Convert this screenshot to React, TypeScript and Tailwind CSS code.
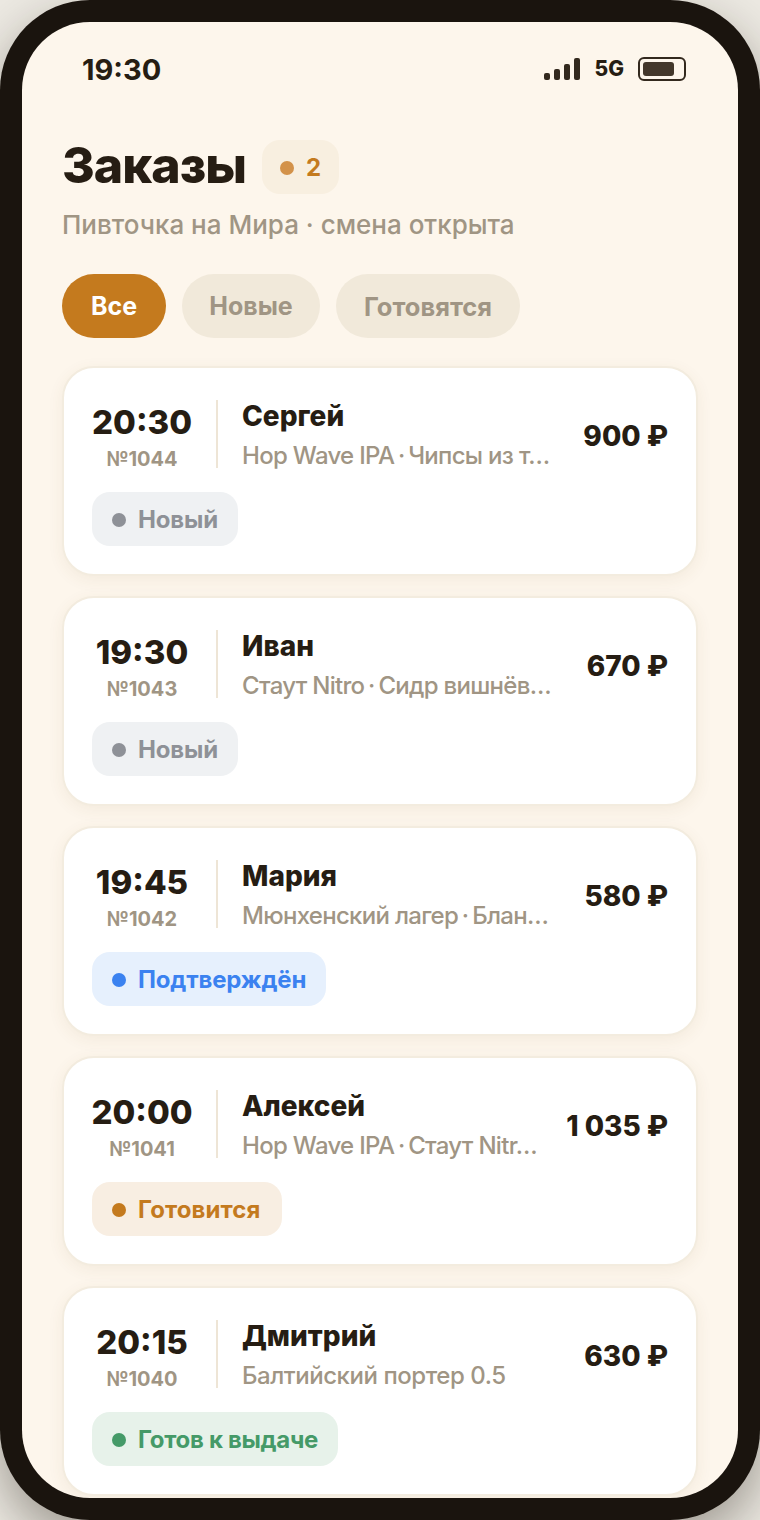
import React from 'react';

const STATUS = {
  fresh: { label: 'Новый', badge: 'bg-[#eff1f3] text-[#8e9197] pr-[20px] tracking-[-0.15px]', dot: 'bg-[#8e9197]' },
  confirmed: { label: 'Подтверждён', badge: 'bg-[#e6f0fd] text-[#3b82f0] pr-[20px] tracking-[-0.15px]', dot: 'bg-[#3b82f0]' },
  cooking: { label: 'Готовится', badge: 'bg-[#f8eee2] text-[#c47a1e] pr-[21px] tracking-[0.1px]', dot: 'bg-[#c47a1e]' },
  ready: { label: 'Готов к выдаче', badge: 'bg-[#e7f2ea] text-[#459a68] pr-[20px] tracking-[-0.3px]', dot: 'bg-[#459a68]' },
};

type Status = keyof typeof STATUS;

interface Order {
  time: string;
  num: string;
  name: string;
  items: string[];
  price: string;
  status: Status;
}

const ORDERS: Order[] = [
  { time: '20:30', num: '№1044', name: 'Сергей', items: ['Hop Wave IPA', 'Чипсы из т…'], price: '900 ₽', status: 'fresh' },
  { time: '19:30', num: '№1043', name: 'Иван', items: ['Стаут Nitro', 'Сидр вишнёв…'], price: '670 ₽', status: 'fresh' },
  { time: '19:45', num: '№1042', name: 'Мария', items: ['Мюнхенский лагер', 'Блан…'], price: '580 ₽', status: 'confirmed' },
  { time: '20:00', num: '№1041', name: 'Алексей', items: ['Hop Wave IPA', 'Стаут Nitr…'], price: '1 035 ₽', status: 'cooking' },
  { time: '20:15', num: '№1040', name: 'Дмитрий', items: ['Балтийский портер 0.5'], price: '630 ₽', status: 'ready' },
];

function OrderCard({ order }: { order: Order }) {
  const st = STATUS[order.status];
  return (
    <div className="shrink-0 h-[210px] rounded-[32px] bg-white border-2 border-[#f3ecdf] shadow-[0_4px_16px_rgba(120,90,40,0.07)] pt-[32px] px-[28px]">
      <div className="flex items-start h-[68px]">
        <div className="w-[100px] h-[68px] flex flex-col items-center shrink-0">
          <span className="text-[33px] leading-[44px] font-extrabold text-[#261d13]">{order.time}</span>
          <span className="text-[20px] leading-[26px] font-bold text-[#a09584] mt-[2px]">{order.num}</span>
        </div>
        <div className="w-[2px] h-[68px] bg-[#eee5d6] mx-[24px] shrink-0" />
        <div className="flex-1 min-w-0 pt-[1px]">
          <div className="text-[28px] leading-[30px] font-extrabold text-[#261d13]">{order.name}</div>
          <div className={`text-[24px] leading-[34px] font-medium text-[#a09584] mt-[8px] whitespace-nowrap ${order.items.length > 1 ? 'tracking-[-0.7px]' : 'tracking-[-0.45px]'}`}>
            {order.items.map((item, i) => (
              <React.Fragment key={item}>
                {i > 0 && <span className="mx-[-2px]"> · </span>}
                {item}
              </React.Fragment>
            ))}
          </div>
        </div>
        <div className="text-[28px] leading-[72px] font-extrabold text-[#261d13] shrink-0">{order.price}</div>
      </div>
      <div className={`mt-[24px] inline-flex items-center h-[54px] rounded-[18px] pl-[20px] pt-[1px] gap-[12px] text-[24px] font-bold ${st.badge}`}>
        <span className={`w-[14px] h-[14px] rounded-full ${st.dot}`} />
        {st.label}
      </div>
    </div>
  );
}

export default function App() {
  return (
    <div className="w-[760px] h-[1520px] bg-[#ece9e2] font-['Inter','Noto_Sans',sans-serif]">
      <div className="w-full h-full rounded-[90px] bg-[#1a140e] p-[22px] shadow-[0_20px_50px_rgba(30,20,10,0.38)]">
        <div className="h-full rounded-[68px] bg-[#fdf6ec] overflow-hidden flex flex-col">
          {/* Status bar */}
          <div className="flex items-center justify-between pl-[60px] pr-[52px] pt-[27px] h-[67px] shrink-0 text-[#261d13]">
            <span className="text-[29px] leading-[40px] pt-[2px] font-bold">19:30</span>
            <div className="flex items-center gap-[14px]">
              <svg width="36" height="22" viewBox="0 0 36 22" fill="#33291e" className="mr-[1px]">
                <rect x="0" y="15" width="6" height="7" rx="2" />
                <rect x="10" y="11" width="6" height="11" rx="2" />
                <rect x="20" y="6" width="6" height="16" rx="2" />
                <rect x="30" y="0" width="6" height="22" rx="2" />
              </svg>
              <span className="text-[21px] leading-[24px] font-extrabold">5G</span>
              <div className="w-[48px] h-[24px] rounded-[6px] border-2 border-[#33291e] p-[3px] flex">
                <div className="w-[31px] h-full rounded-[3px] bg-[#43372b]" />
              </div>
            </div>
          </div>

          <div className="px-[40px] pt-[51px] flex flex-col flex-1 min-h-0">
            <div className="flex items-center gap-[16px] h-[54px] shrink-0">
              <h1 className="text-[50px] leading-[54px] pb-[4px] font-extrabold text-[#261d13] tracking-[-1px]">Заказы</h1>
              <div className="flex items-center gap-[12px] h-[54px] rounded-[18px] bg-[#f8efe0] px-[18px] pt-[1px] text-[24px] font-bold text-[#c47a1e]">
                <span className="w-[14px] h-[14px] rounded-full bg-[#d3924a]" />
                2
              </div>
            </div>
            <p className="mt-[14px] text-[26px] leading-[34px] font-medium text-[#a09584]">Пивточка на Мира · смена открыта</p>

            <div className="flex gap-[16px] mt-[32px] shrink-0">
              <button className="h-[64px] w-[104px] rounded-[32px] bg-[#c47a1e] pt-[2px] text-white text-[25px] font-bold">Все</button>
              <button className="h-[64px] w-[138px] rounded-[32px] bg-[#f1e9da] pt-[2px] text-[#a09584] text-[25px] font-bold">Новые</button>
              <button className="h-[64px] w-[184px] rounded-[32px] bg-[#f1e9da] pt-[2px] text-[#a09584] text-[25.5px] font-bold">Готовятся</button>
            </div>

            <div className="flex flex-col gap-[20px] mt-[28px] flex-1 min-h-0">
              {ORDERS.map(o => <OrderCard key={o.num} order={o} />)}
            </div>
          </div>
        </div>
      </div>
    </div>
  );
}
